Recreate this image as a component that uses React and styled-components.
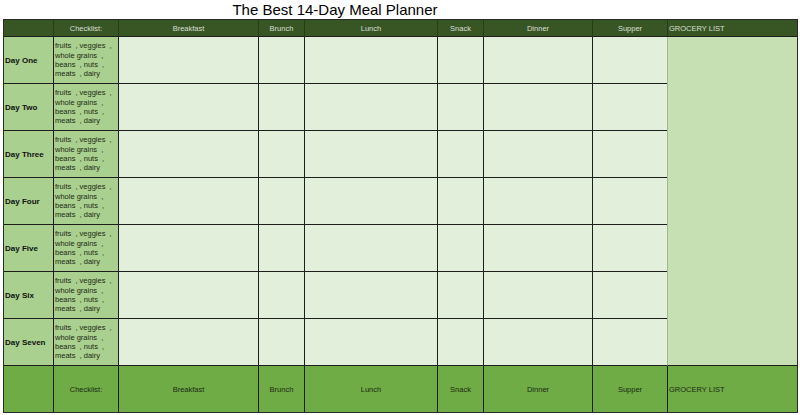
import React from "react";
import styled, { createGlobalStyle } from "styled-components";

// column tracks: day, checklist, 6 meals, grocery
const COLUMNS = "50px 65px 140px 46px 133px 46px 109px 75px 129px";
const MEALS = ["Breakfast", "Brunch", "Lunch", "Snack", "Dinner", "Supper"];
const DAYS = ["One", "Two", "Three", "Four", "Five", "Six", "Seven"];
const CHECKLIST = ["fruits  , veggies  ,", "whole grains  ,", "beans  , nuts  ,", "meats  , dairy"];

const GlobalStyle = createGlobalStyle`
   html, body {
      margin: 0;
      padding: 0;
      background: #ffffff;
   }
   body {
      font-family: "Liberation Sans", Arial, sans-serif;
   }
`;

const Page = styled.div`
   width: 800px;
   height: 415px;
   overflow: hidden;
`;

const Title = styled.h1`
   margin: 0 0 0 3px;
   width: 664px;
   height: 19px;
   font-size: 15px;
   line-height: 19px;
   font-weight: 400;
   color: #000;
   text-align: center;
   white-space: nowrap;
`;

const Table = styled.div`
   margin-left: 3px;
   width: 795px;
   display: grid;
   grid-template-columns: ${COLUMNS};
   grid-template-rows: 17px repeat(7, 47px) 46px;
   border: 1px solid #2b2b2b;
   box-sizing: border-box;
`;

const Cell = styled.div`
   box-sizing: border-box;
   display: flex;
   align-items: center;
   justify-content: ${(p) => (p.$left ? "flex-start" : "center")};
   padding-left: ${(p) => (p.$left ? "1px" : "0")};
   border-right: ${(p) => (p.$last ? "none" : "1px solid #1e1e1e")};
   border-bottom: ${(p) => (p.$bottom ? "none" : "1px solid #1e1e1e")};
   font-size: 7.5px;
   white-space: nowrap;
   overflow: hidden;
`;

const HeadCell = styled(Cell)`
   background: #375623;
   color: #dcdfd8;
   border-right-color: #263d18;
`;

const FootCell = styled(Cell)`
   background: #6fac46;
   color: #1c2a12;
`;

const DayCell = styled(Cell)`
   background: #a9d08e;
   color: #111;
   font-size: 8px;
   font-weight: 700;
`;

const ChecklistCell = styled(Cell)`
   background: #a9d08e;
   color: #1d2a16;
   flex-direction: column;
   align-items: flex-start;
   justify-content: center;
   line-height: 9.4px;
   white-space: pre;
`;

const MealCell = styled(Cell)`
   background: #e2efda;
`;

const GroceryCell = styled(Cell)`
   grid-column: 9;
   grid-row: 2 / span 7;
   background: #c6e0b4;
   border-left: 1px solid #9fb98f;
   margin-left: -1px;
`;

const SupperCell = styled(MealCell)`
   border-right-color: #9fb98f;
`;

function LabelRow({ Component, dark }) {
   return (
      <>
         <Component />
         <Component>Checklist:</Component>
         {MEALS.map((m) => (
            <Component key={m}>{m}</Component>
         ))}
         <Component $left $last {...(dark ? { $bottom: true } : {})}>GROCERY LIST</Component>
      </>
   );
}

export default function App() {
   return (
      <Page>
         <GlobalStyle />
         <Title>The Best 14-Day Meal Planner</Title>
         <Table>
            <LabelRow Component={HeadCell} />
            {DAYS.map((d, i) => (
               <React.Fragment key={d}>
                  <DayCell $left style={{ gridRow: i + 2 }}>Day {d}</DayCell>
                  <ChecklistCell $left style={{ gridRow: i + 2 }}>
                     {CHECKLIST.map((line) => (
                        <span key={line}>{line}</span>
                     ))}
                  </ChecklistCell>
                  {MEALS.map((m) =>
                     m === "Supper" ? (
                        <SupperCell key={m} style={{ gridRow: i + 2 }} />
                     ) : (
                        <MealCell key={m} style={{ gridRow: i + 2 }} />
                     )
                  )}
               </React.Fragment>
            ))}
            <GroceryCell $last />
            <FootCell $bottom />
            <FootCell $bottom>Checklist:</FootCell>
            {MEALS.map((m) => (
               <FootCell key={m} $bottom>{m}</FootCell>
            ))}
            <FootCell $left $last $bottom>GROCERY LIST</FootCell>
         </Table>
      </Page>
   );
}
